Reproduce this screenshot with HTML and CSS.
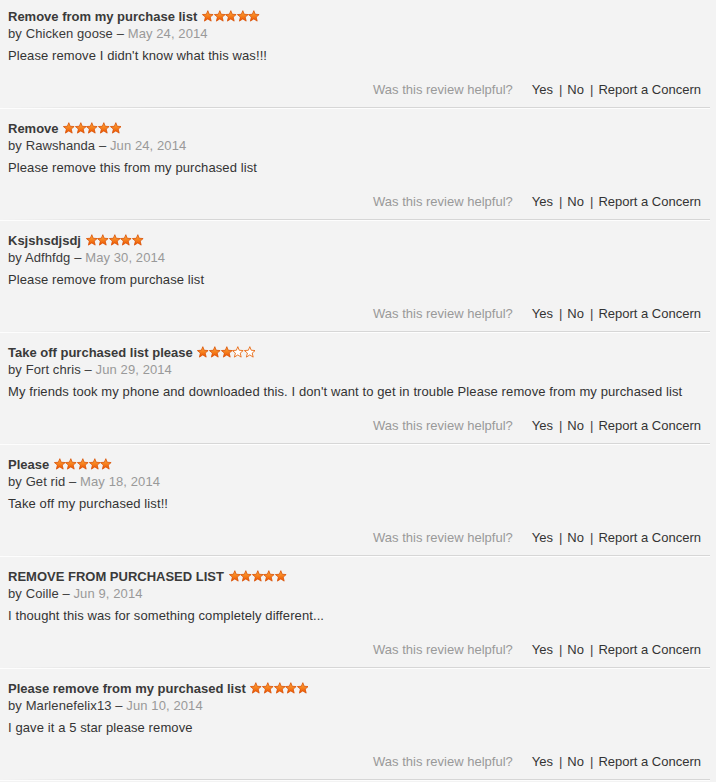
FILE: index.html
```html
<!DOCTYPE html>
<html>
<head>
<meta charset="utf-8">
<link rel="stylesheet" href="styles.css">
</head>
<body>
<svg width="0" height="0" class="defs">
  <defs>
    <linearGradient id="sg" x1="0" y1="0" x2="0" y2="1">
      <stop offset="0" stop-color="#ffad3c"/>
      <stop offset="1" stop-color="#ee5400"/>
    </linearGradient>
    <symbol id="star" viewBox="0 0 12 12">
      <polygon points="6,0.5 7.5,4.2 11.6,4.5 8.5,7.1 9.5,11.3 6,9 2.5,11.3 3.5,7.1 0.4,4.5 4.5,4.2" fill="url(#sg)" stroke="#d84e00" stroke-width="0.8" stroke-linejoin="round"/>
    </symbol>
    <symbol id="star-empty" viewBox="0 0 12 12">
      <polygon points="6,0.5 7.5,4.2 11.6,4.5 8.5,7.1 9.5,11.3 6,9 2.5,11.3 3.5,7.1 0.4,4.5 4.5,4.2" fill="#fff" stroke="#e8660c" stroke-width="0.9" stroke-linejoin="round"/>
    </symbol>
  </defs>
</svg>
<main class="reviews">
  <article class="review">
    <h3 class="title">Remove from my purchase list <span class="stars"><svg><use href="#star"/></svg><svg><use href="#star"/></svg><svg><use href="#star"/></svg><svg><use href="#star"/></svg><svg><use href="#star"/></svg></span></h3>
    <div class="by">by Chicken goose – <span class="date">May 24, 2014</span></div>
    <p class="text">Please remove I didn't know what this was!!!</p>
    <div class="helpful"><span class="q">Was this review helpful?</span><span class="links">Yes<span class="bar">|</span>No<span class="bar">|</span>Report a Concern</span></div>
  </article>
  <article class="review">
    <h3 class="title">Remove <span class="stars"><svg><use href="#star"/></svg><svg><use href="#star"/></svg><svg><use href="#star"/></svg><svg><use href="#star"/></svg><svg><use href="#star"/></svg></span></h3>
    <div class="by">by Rawshanda – <span class="date">Jun 24, 2014</span></div>
    <p class="text">Please remove this from my purchased list</p>
    <div class="helpful"><span class="q">Was this review helpful?</span><span class="links">Yes<span class="bar">|</span>No<span class="bar">|</span>Report a Concern</span></div>
  </article>
  <article class="review">
    <h3 class="title">Ksjshsdjsdj <span class="stars"><svg><use href="#star"/></svg><svg><use href="#star"/></svg><svg><use href="#star"/></svg><svg><use href="#star"/></svg><svg><use href="#star"/></svg></span></h3>
    <div class="by">by Adfhfdg – <span class="date">May 30, 2014</span></div>
    <p class="text">Please remove from purchase list</p>
    <div class="helpful"><span class="q">Was this review helpful?</span><span class="links">Yes<span class="bar">|</span>No<span class="bar">|</span>Report a Concern</span></div>
  </article>
  <article class="review">
    <h3 class="title">Take off purchased list please <span class="stars"><svg><use href="#star"/></svg><svg><use href="#star"/></svg><svg><use href="#star"/></svg><svg><use href="#star-empty"/></svg><svg><use href="#star-empty"/></svg></span></h3>
    <div class="by">by Fort chris – <span class="date">Jun 29, 2014</span></div>
    <p class="text">My friends took my phone and downloaded this. I don't want to get in trouble Please remove from my purchased list</p>
    <div class="helpful"><span class="q">Was this review helpful?</span><span class="links">Yes<span class="bar">|</span>No<span class="bar">|</span>Report a Concern</span></div>
  </article>
  <article class="review">
    <h3 class="title">Please <span class="stars"><svg><use href="#star"/></svg><svg><use href="#star"/></svg><svg><use href="#star"/></svg><svg><use href="#star"/></svg><svg><use href="#star"/></svg></span></h3>
    <div class="by">by Get rid – <span class="date">May 18, 2014</span></div>
    <p class="text">Take off my purchased list!!</p>
    <div class="helpful"><span class="q">Was this review helpful?</span><span class="links">Yes<span class="bar">|</span>No<span class="bar">|</span>Report a Concern</span></div>
  </article>
  <article class="review">
    <h3 class="title">REMOVE FROM PURCHASED LIST <span class="stars"><svg><use href="#star"/></svg><svg><use href="#star"/></svg><svg><use href="#star"/></svg><svg><use href="#star"/></svg><svg><use href="#star"/></svg></span></h3>
    <div class="by">by Coille – <span class="date">Jun 9, 2014</span></div>
    <p class="text">I thought this was for something completely different...</p>
    <div class="helpful"><span class="q">Was this review helpful?</span><span class="links">Yes<span class="bar">|</span>No<span class="bar">|</span>Report a Concern</span></div>
  </article>
  <article class="review">
    <h3 class="title">Please remove from my purchased list <span class="stars"><svg><use href="#star"/></svg><svg><use href="#star"/></svg><svg><use href="#star"/></svg><svg><use href="#star"/></svg><svg><use href="#star"/></svg></span></h3>
    <div class="by">by Marlenefelix13 – <span class="date">Jun 10, 2014</span></div>
    <p class="text">I gave it a 5 star please remove</p>
    <div class="helpful"><span class="q">Was this review helpful?</span><span class="links">Yes<span class="bar">|</span>No<span class="bar">|</span>Report a Concern</span></div>
  </article>
</main>
</body>
</html>
```

FILE: styles.css
```css
html, body {
  margin: 0;
  padding: 0;
  background: #f3f3f3;
}
body {
  font-family: "Liberation Sans", Arial, Helvetica, sans-serif;
  font-size: 13px;
  line-height: 17px;
  color: #333;
}
.defs {
  position: absolute;
  width: 0;
  height: 0;
}
.reviews {
  padding: 8px 0 0 0;
}
.review {
  padding: 0 15px 0 8px;
  margin-bottom: 12px;
}
.review::after {
  content: "";
  display: block;
  height: 1px;
  margin: 9px -9px 0 -8px;
  background: linear-gradient(to right, rgba(210,210,210,0) 0, #d6d6d6 180px, #d6d6d6 100%);
  box-shadow: 0 1px 0 rgba(255,255,255,0.8);
}
.title {
  margin: 0;
  font-size: 13px;
  font-weight: bold;
  color: #3a3a3a;
  line-height: 17px;
}
.stars {
  display: inline-flex;
  vertical-align: -1px;
  margin-left: 1px;
}
.stars svg {
  width: 11.6px;
  height: 12px;
  display: block;
}
.by {
  color: #3a3a3a;
  letter-spacing: 0.1px;
}
.date {
  color: #999;
}
.text {
  margin: 5px 0 0 0;
  color: #333;
  letter-spacing: 0.1px;
}
.helpful {
  margin-top: 17px;
  display: flex;
  justify-content: flex-end;
  gap: 19px;
}
.q {
  color: #999;
}
.links {
  color: #333;
}
.bar {
  color: #444;
  margin: 0 5px 0 6px;
}
```
